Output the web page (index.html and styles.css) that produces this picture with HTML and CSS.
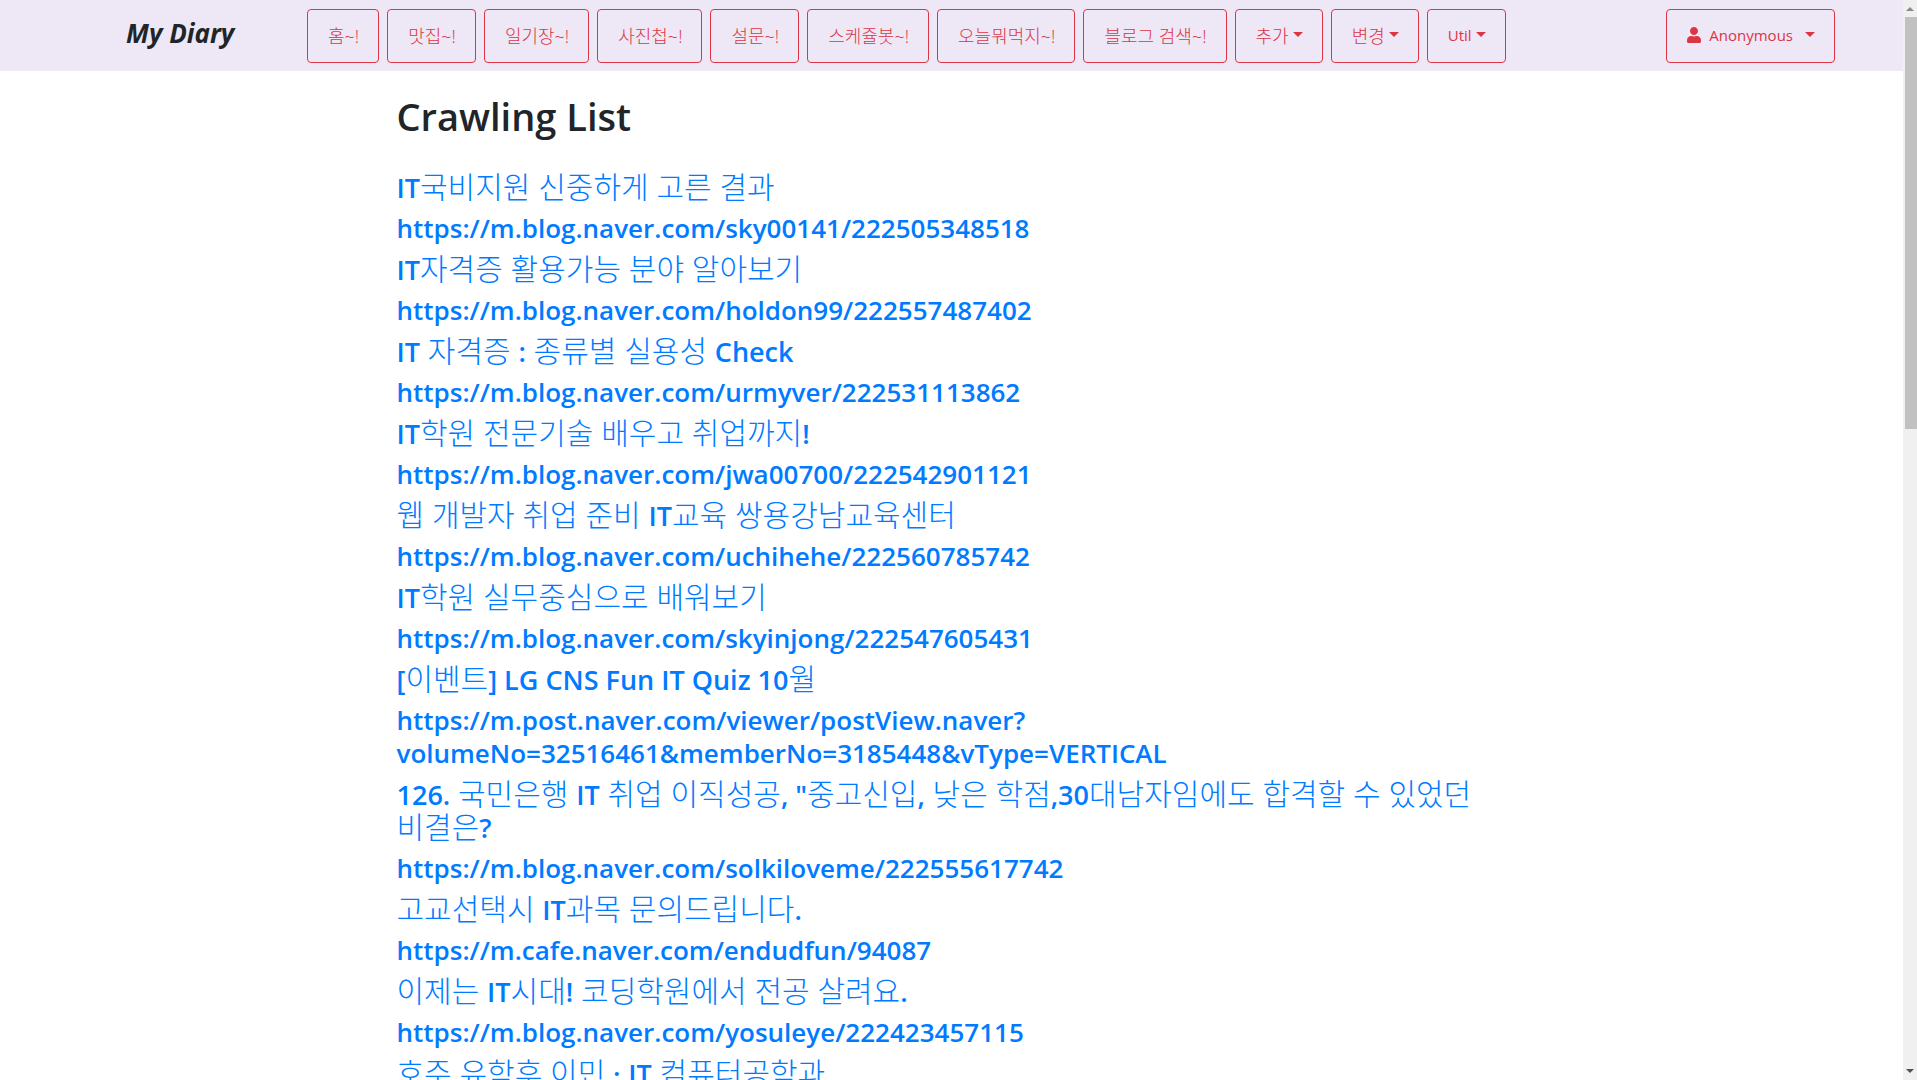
FILE: index.html
```html
<!DOCTYPE html>
<html lang="ko">
<head>
<meta charset="utf-8">
<meta name="viewport" content="width=device-width, initial-scale=1">
<title>My Diary</title>
<link rel="stylesheet" href="styles.css">
</head>
<body>
<div class="page">
  <header class="navbar">
    <a class="brand" href="#">My Diary</a>
    <nav class="menu">
      <a class="btn" href="#">홈~!</a>
      <a class="btn" href="#">맛집~!</a>
      <a class="btn" href="#">일기장~!</a>
      <a class="btn" href="#">사진첩~!</a>
      <a class="btn" href="#">설문~!</a>
      <a class="btn" href="#">스케쥴봇~!</a>
      <a class="btn" href="#">오늘뭐먹지~!</a>
      <a class="btn" href="#">블로그 검색~!</a>
      <button class="btn caret" type="button">추가</button>
      <button class="btn caret" type="button">변경</button>
      <button class="btn caret latin" type="button">Util</button>
    </nav>
    <button class="btn caret latin user" type="button">
      <svg class="user-icon" viewBox="0 0 448 512" aria-hidden="true"><path fill="currentColor" d="M224 256c70.7 0 128-57.3 128-128S294.700 0 224 0 96 57.300 96 128s57.300 128 128 128zm89.600 32h-16.700c-22.200 10.200-46.900 16-72.900 16s-50.600-5.800-72.900-16h-16.700C60.200 288 0 348.200 0 422.400V464c0 26.500 21.500 48 48 48h352c26.500 0 48-21.500 48-48v-41.600c0-74.200-60.200-134.400-134.400-134.400z"/></svg>
      <span>Anonymous</span>
    </button>
  </header>
  <main class="container">
    <h1 class="heading">Crawling List</h1>
    <h3 class="title"><a href="#"><b>IT</b>국비지원 신중하게 고른 결과</a></h3>
    <h3 class="url"><a href="#">https://m.blog.naver.com/sky00141/222505348518</a></h3>
    <h3 class="title"><a href="#"><b>IT</b>자격증 활용가능 분야 알아보기</a></h3>
    <h3 class="url"><a href="#">https://m.blog.naver.com/holdon99/222557487402</a></h3>
    <h3 class="title"><a href="#"><b>IT</b> 자격증 <b>:</b> 종류별 실용성 <b>Check</b></a></h3>
    <h3 class="url"><a href="#">https://m.blog.naver.com/urmyver/222531113862</a></h3>
    <h3 class="title"><a href="#"><b>IT</b>학원 전문기술 배우고 취업까지<b>!</b></a></h3>
    <h3 class="url"><a href="#">https://m.blog.naver.com/jwa00700/222542901121</a></h3>
    <h3 class="title"><a href="#">웹 개발자 취업 준비 <b>IT</b>교육 쌍용강남교육센터</a></h3>
    <h3 class="url"><a href="#">https://m.blog.naver.com/uchihehe/222560785742</a></h3>
    <h3 class="title"><a href="#"><b>IT</b>학원 실무중심으로 배워보기</a></h3>
    <h3 class="url"><a href="#">https://m.blog.naver.com/skyinjong/222547605431</a></h3>
    <h3 class="title"><a href="#"><b>[</b>이벤트<b>] LG CNS Fun IT Quiz 10</b>월</a></h3>
    <h3 class="url"><a href="#">https://m.post.naver.com/viewer/postView.naver?<wbr>volumeNo=32516461&amp;memberNo=3185448&amp;vType=VERTICAL</a></h3>
    <h3 class="title"><a href="#"><b>126.</b> 국민은행 <b>IT</b> 취업 이직성공<b>, "</b>중고신입<b>,</b> 낮은 학점<b>,30</b>대남자임에도 합격할 수 있었던 비결은<b>?</b></a></h3>
    <h3 class="url"><a href="#">https://m.blog.naver.com/solkiloveme/222555617742</a></h3>
    <h3 class="title"><a href="#">고교선택시 <b>IT</b>과목 문의드립니다<b>.</b></a></h3>
    <h3 class="url"><a href="#">https://m.cafe.naver.com/endudfun/94087</a></h3>
    <h3 class="title"><a href="#">이제는 <b>IT</b>시대<b>!</b> 코딩학원에서 전공 살려요<b>.</b></a></h3>
    <h3 class="url"><a href="#">https://m.blog.naver.com/yosuleye/222423457115</a></h3>
    <h3 class="title"><a href="#">호주 유학후 이민 <b>·</b> <b>IT</b> 컴퓨터공학과</a></h3>
  </main>
</div>
<div class="scrollbar" aria-hidden="true">
  <span class="arrow up"></span>
  <span class="thumb"></span>
  <span class="arrow down"></span>
</div>
</body>
</html>
```

FILE: styles.css
```css
* { box-sizing: border-box; }

body {
  margin: 0;
  height: 100vh;
  display: flex;
  overflow: hidden;
  background: #fff;
  color: #212529;
  font-family: "Open Sans", "Noto Sans CJK KR", sans-serif;
}

a { color: inherit; text-decoration: none; }

.page { flex: 1; min-width: 0; overflow: hidden; }

/* Navigation */
.navbar {
  display: flex;
  align-items: center;
  height: 71px;
  padding: 0 68px 0 126px;
  background: #ede7f6;
}

.brand {
  width: 181px;
  padding-bottom: 6px;
  font-size: 26px;
  font-weight: 700;
  font-style: italic;
  white-space: nowrap;
}

.menu { display: flex; gap: 8px; }

.btn {
  display: flex;
  align-items: center;
  height: 54px;
  padding: 0 19px 2px 20px;
  border: 1px solid #dc3545;
  border-radius: 4px;
  background: transparent;
  color: #dc3545;
  font-family: inherit;
  font-size: 18px;
  font-weight: 300;
  white-space: nowrap;
}

.latin { font-size: 15px; font-weight: 400; }

.caret::after {
  content: "";
  margin-left: 4px;
  border: 5px solid transparent;
  border-top-color: currentColor;
  border-bottom: 0;
}

.user { margin-left: auto; gap: 8px; }
.user-icon { width: 14px; height: 16px; }

/* Article list */
.container {
  max-width: 1140px;
  margin: 0 auto;
  padding: 21px 15px 0;
}

.heading {
  margin: 0 0 30px;
  font-size: 38px;
  font-weight: 600;
  line-height: 48px;
}

.title, .url {
  color: #007bff;
  line-height: 33px;
}

.title { margin: 0 0 9px; font-size: 30px; font-weight: 300; word-break: keep-all; }
.title b { font-size: 27px; font-weight: 600; line-height: 1; }
.url { margin: 0 0 7px; font-size: 26px; font-weight: 600; }

/* Scroll track */
.scrollbar {
  display: flex;
  flex-direction: column;
  align-items: center;
  width: 14px;
  padding: 7px 0;
  background: #f0f0f0;
}

.arrow { border: 4px solid transparent; }
.up { border-top: 0; border-bottom-color: #8a8a8a; }
.down { margin-top: auto; border-bottom: 0; border-top-color: #505050; }
.thumb { width: 12px; height: 412px; margin: 6px 0 0 2px; background: #c1c1c1; }
```
